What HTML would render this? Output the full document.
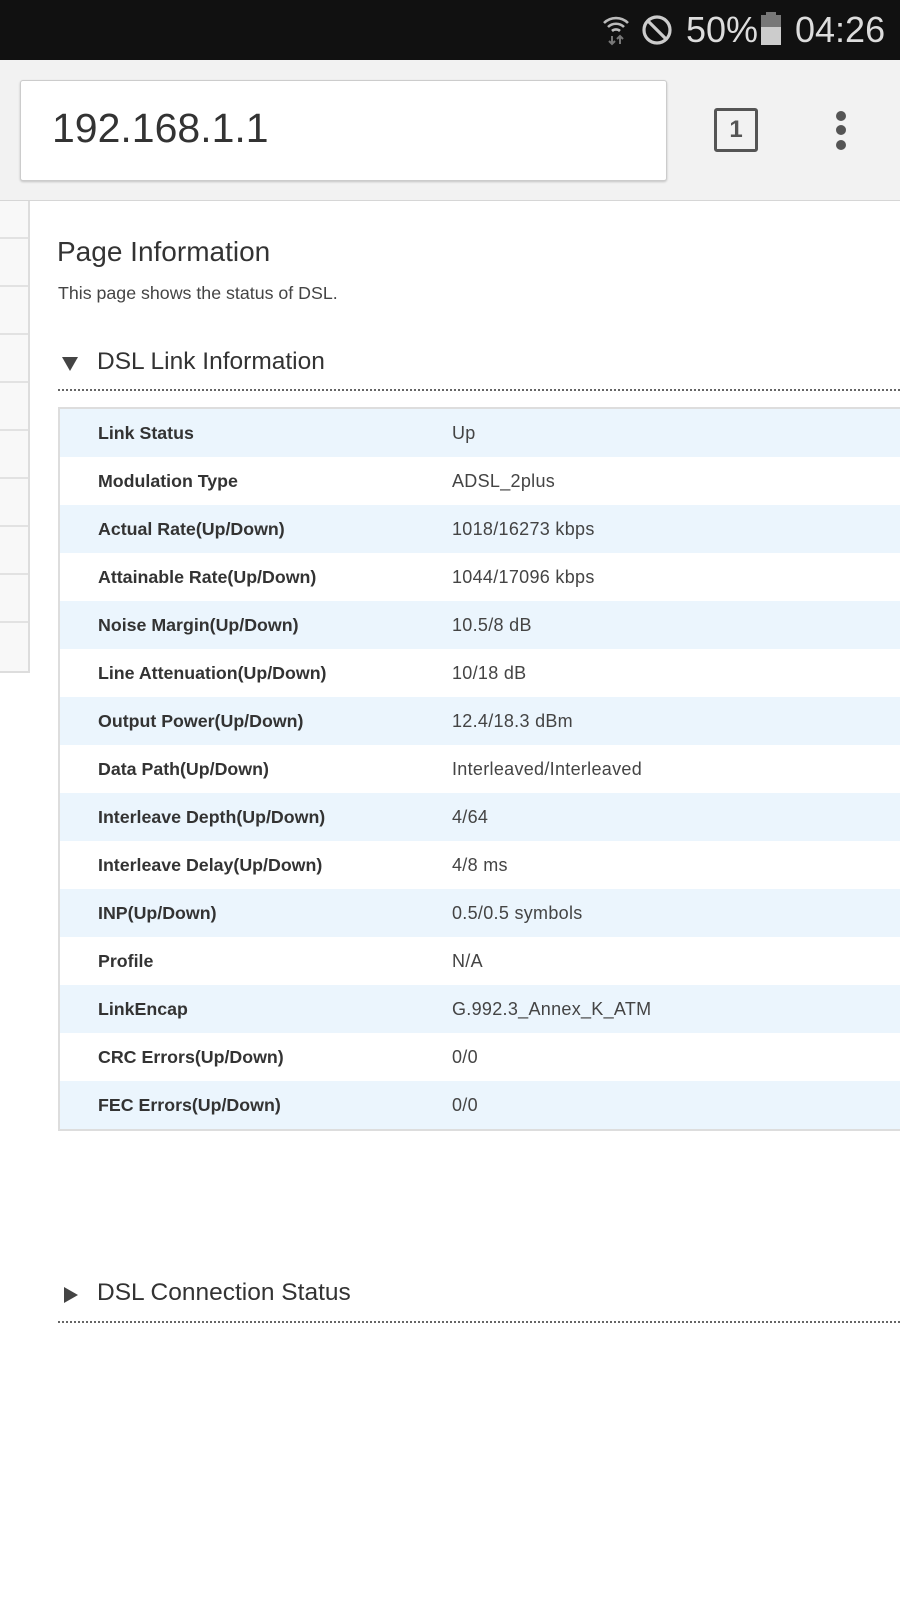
<!DOCTYPE html>
<html><head><meta charset="utf-8">
<style>
html,body{margin:0;padding:0;}
body{width:900px;height:1600px;position:relative;overflow:hidden;background:#fff;font-family:"Liberation Sans",Roboto,sans-serif;color:#333;}
.abs{position:absolute;}
#status{left:0;top:0;width:900px;height:60px;background:#111;}
#status .t{color:#ddd;font-size:36px;top:9px;}
#toolbar{left:0;top:60px;width:900px;height:140px;background:#f2f2f2;border-bottom:1px solid #d6d6d6;}
#url{left:20px;top:80px;width:645px;height:99px;background:#fff;border:1px solid #ccc;border-radius:3px;box-shadow:0 1px 2px rgba(0,0,0,.2);}
#url span{position:absolute;left:31px;top:24px;font-size:41px;color:#333;}
#side{left:0;top:201px;width:28px;height:470px;background:#f8f8f8;border-right:2px solid #ddd;border-bottom:2px solid #ddd;}
.sl{position:absolute;left:0;width:28px;height:2px;background:#e2e2e2;}
table{position:absolute;left:58px;top:407px;border-collapse:collapse;width:860px;border-top:2px solid #ddd;border-left:2px solid #ddd;border-bottom:2px solid #ddd;}
td{height:48px;padding:0;vertical-align:middle;}
td.l{padding-left:38px;width:354px;font-weight:bold;color:#333;font-size:17.8px;}
td.v{color:#444;font-size:18px;letter-spacing:0.3px;}
tr:nth-child(odd){background:#ebf5fd;}
.dot{position:absolute;left:58px;width:842px;border-top:2px dotted #666;height:0;}
</style></head><body>
<div id="status" class="abs">
  <svg class="abs" style="left:603px;top:14px" width="26" height="32" viewBox="0 0 26 32">
    <path d="M1 9 A17 17 0 0 1 25 9" stroke="#bbb" stroke-width="2.6" fill="none"/>
    <path d="M5 13 A11.5 11.5 0 0 1 21 13" stroke="#bbb" stroke-width="2.6" fill="none"/>
    <path d="M9 17 A6 6 0 0 1 17 17" stroke="#bbb" stroke-width="2.6" fill="none"/>
    <path d="M9 22v8M6 27l3 3 3-3M17 30v-8M14 25l3-3 3 3" stroke="#777" stroke-width="2" fill="none"/>
  </svg>
  <svg class="abs" style="left:641px;top:14px" width="32" height="32" viewBox="0 0 32 32">
    <circle cx="16" cy="16" r="13" stroke="#ccc" stroke-width="3.2" fill="none"/>
    <path d="M7 7 L25 25" stroke="#ccc" stroke-width="3.2"/>
  </svg>
  <span class="abs t" style="left:686px;">50%</span>
  <div class="abs" style="left:761px;top:15px;width:20px;height:30px;background:#ccc;"></div>
  <div class="abs" style="left:761px;top:15px;width:20px;height:12px;background:#777;"></div>
  <div class="abs" style="left:766px;top:12px;width:10px;height:3px;background:#777;"></div>
  <span class="abs t" style="left:795px;">04:26</span>
</div>
<div id="toolbar" class="abs"></div>
<div id="url" class="abs"><span>192.168.1.1</span></div>
<div class="abs" style="left:714px;top:108px;width:38px;height:38px;border:3.5px solid #555;border-radius:3px;text-align:center;font-weight:bold;font-size:24px;line-height:38px;color:#555;">1</div>
<div class="abs" style="left:836px;top:111px;width:10px;height:10px;border-radius:5px;background:#555;"></div>
<div class="abs" style="left:836px;top:125px;width:10px;height:10px;border-radius:5px;background:#555;"></div>
<div class="abs" style="left:836px;top:140px;width:10px;height:10px;border-radius:5px;background:#555;"></div>

<div id="side" class="abs">
  <div class="sl" style="top:36px"></div><div class="sl" style="top:84px"></div><div class="sl" style="top:132px"></div>
  <div class="sl" style="top:180px"></div><div class="sl" style="top:228px"></div><div class="sl" style="top:276px"></div>
  <div class="sl" style="top:324px"></div><div class="sl" style="top:372px"></div><div class="sl" style="top:420px"></div>
</div>

<div class="abs" style="left:57px;top:236px;font-size:28px;color:#333;">Page Information</div>
<div class="abs" style="left:58px;top:283px;font-size:17.8px;color:#444;">This page shows the status of DSL.</div>

<svg class="abs" style="left:62px;top:357px" width="16" height="14"><path d="M0 0H16L8 14Z" fill="#444"/></svg>
<div class="abs" style="left:97px;top:348px;font-size:24.5px;color:#333;">DSL Link Information</div>
<div class="dot" style="top:389px"></div>

<table>
<tr><td class="l">Link Status</td><td class="v">Up</td></tr>
<tr><td class="l">Modulation Type</td><td class="v">ADSL_2plus</td></tr>
<tr><td class="l">Actual Rate(Up/Down)</td><td class="v">1018/16273 kbps</td></tr>
<tr><td class="l">Attainable Rate(Up/Down)</td><td class="v">1044/17096 kbps</td></tr>
<tr><td class="l">Noise Margin(Up/Down)</td><td class="v">10.5/8 dB</td></tr>
<tr><td class="l">Line Attenuation(Up/Down)</td><td class="v">10/18 dB</td></tr>
<tr><td class="l">Output Power(Up/Down)</td><td class="v">12.4/18.3 dBm</td></tr>
<tr><td class="l">Data Path(Up/Down)</td><td class="v">Interleaved/Interleaved</td></tr>
<tr><td class="l">Interleave Depth(Up/Down)</td><td class="v">4/64</td></tr>
<tr><td class="l">Interleave Delay(Up/Down)</td><td class="v">4/8 ms</td></tr>
<tr><td class="l">INP(Up/Down)</td><td class="v">0.5/0.5 symbols</td></tr>
<tr><td class="l">Profile</td><td class="v">N/A</td></tr>
<tr><td class="l">LinkEncap</td><td class="v">G.992.3_Annex_K_ATM</td></tr>
<tr><td class="l">CRC Errors(Up/Down)</td><td class="v">0/0</td></tr>
<tr><td class="l">FEC Errors(Up/Down)</td><td class="v">0/0</td></tr>
</table>

<svg class="abs" style="left:64px;top:1287px" width="14" height="16"><path d="M0 0V16L14 8Z" fill="#444"/></svg>
<div class="abs" style="left:97px;top:1279px;font-size:24.5px;color:#333;">DSL Connection Status</div>
<div class="dot" style="top:1321px"></div>
</body></html>
